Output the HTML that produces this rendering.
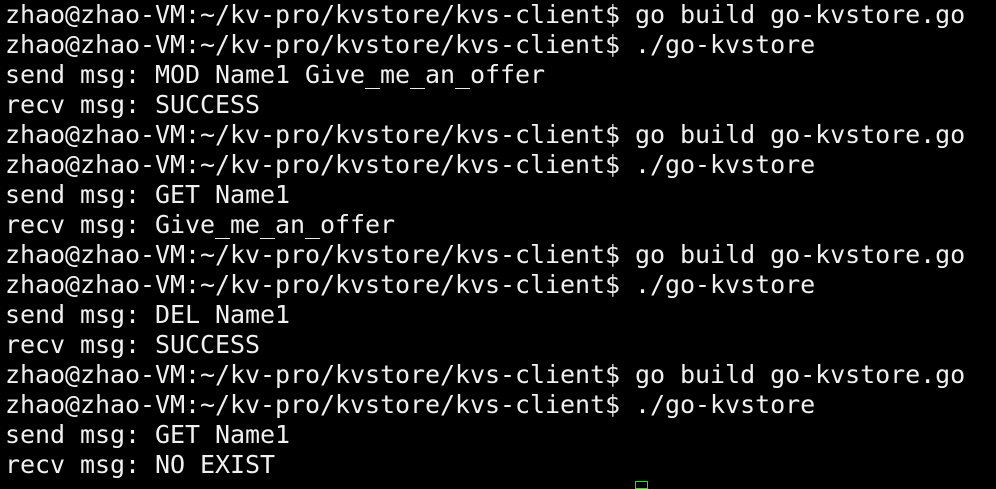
<!DOCTYPE html>
<html><head><style>
html,body{margin:0;padding:0;background:#000;width:996px;height:485px;overflow:hidden}
pre{margin:0;position:absolute;left:5px;top:0;font-family:"DejaVu Sans Mono","Liberation Mono",monospace;font-size:25px;line-height:30px;color:#f0f0f0;letter-spacing:-0.05px}
.cur{position:absolute;left:635px;top:481px;width:13px;height:8px;border:1px solid #0f0;box-sizing:border-box}
</style></head><body>
<pre>zhao@zhao-VM:~/kv-pro/kvstore/kvs-client$ go build go-kvstore.go
zhao@zhao-VM:~/kv-pro/kvstore/kvs-client$ ./go-kvstore
send msg: MOD Name1 Give_me_an_offer
recv msg: SUCCESS
zhao@zhao-VM:~/kv-pro/kvstore/kvs-client$ go build go-kvstore.go
zhao@zhao-VM:~/kv-pro/kvstore/kvs-client$ ./go-kvstore
send msg: GET Name1
recv msg: Give_me_an_offer
zhao@zhao-VM:~/kv-pro/kvstore/kvs-client$ go build go-kvstore.go
zhao@zhao-VM:~/kv-pro/kvstore/kvs-client$ ./go-kvstore
send msg: DEL Name1
recv msg: SUCCESS
zhao@zhao-VM:~/kv-pro/kvstore/kvs-client$ go build go-kvstore.go
zhao@zhao-VM:~/kv-pro/kvstore/kvs-client$ ./go-kvstore
send msg: GET Name1
recv msg: NO EXIST</pre>
<div class="cur"></div>
</body></html>
